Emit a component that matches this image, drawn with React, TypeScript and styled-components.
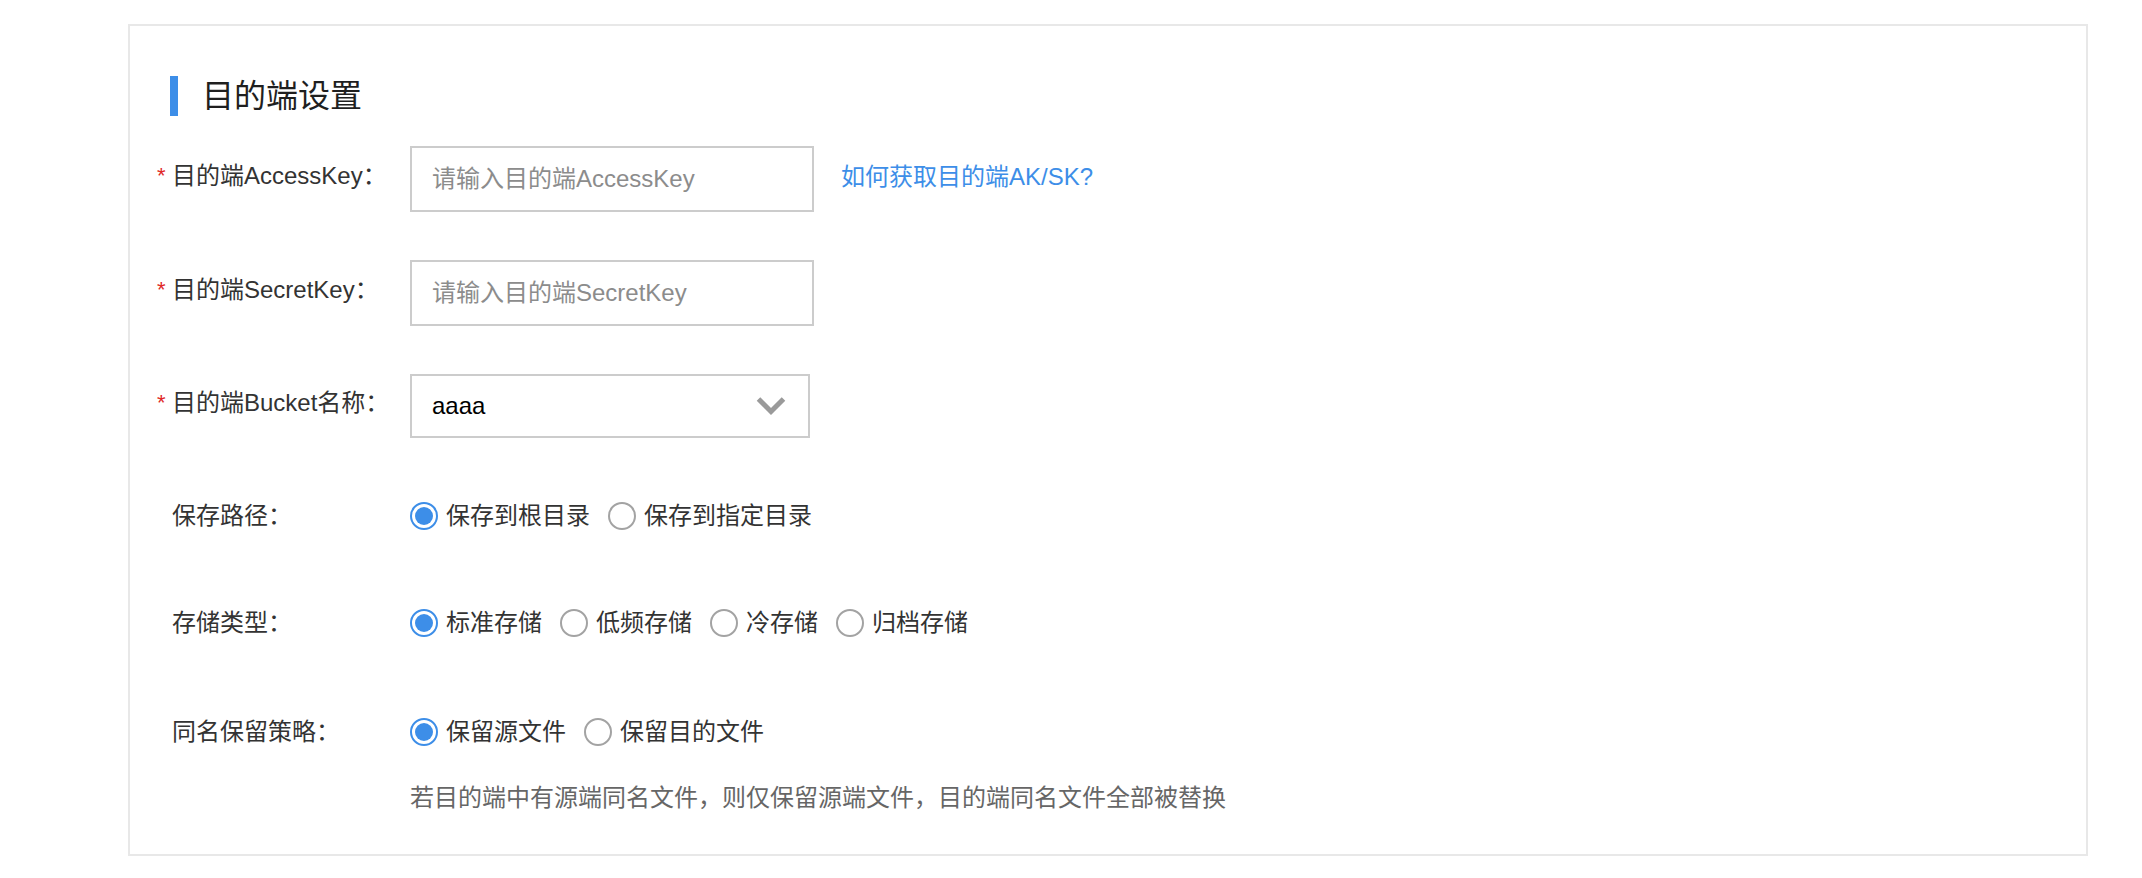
import React from 'react';
import styled, { createGlobalStyle } from 'styled-components';

const FONT = `"Liberation Sans", "Noto Sans CJK SC", sans-serif`;
const BLUE = '#3d8ee8';

const GlobalStyle = createGlobalStyle`
  html, body {
    margin: 0;
    padding: 0;
    background: #fff;
  }
  body {
    font-family: ${FONT};
    color: #333;
  }
`;

const Card = styled.section`
  box-sizing: border-box;
  width: 1960px;
  margin: 24px 0 0 128px;
  padding: 50px 0 38px 0;
  border: 2px solid #e8e8e8;
  background: #fff;
`;

const Header = styled.div`
  display: flex;
  align-items: center;
  height: 40px;
  padding-left: 40px;
  margin-bottom: 30px;
`;

const HeaderBar = styled.span`
  width: 8px;
  height: 40px;
  background: ${BLUE};
  margin-right: 24px;
`;

const Title = styled.h2`
  margin: 0;
  font-size: 32px;
  font-weight: 400;
  line-height: 40px;
  color: #1f1f1f;
`;

const Form = styled.div`
  display: flex;
  flex-direction: column;
  padding-left: 27px;
`;

interface RowProps {
  $top?: number;
}

const Row = styled.div<RowProps>`
  display: flex;
  align-items: center;
  margin-top: ${p => p.$top ?? 0}px;
`;

interface LabelProps {
  $lift?: boolean;
}

// labels beside text inputs sit a few pixels above the box centre
const Label = styled.label<LabelProps>`
  display: flex;
  align-items: center;
  width: 253px;
  flex-shrink: 0;
  margin-top: ${p => (p.$lift ? -6 : 0)}px;
  font-size: 24px;
  line-height: 36px;
  color: #333;
`;

const Asterisk = styled.span`
  width: 15px;
  color: #e02828;
  font-size: 22px;
`;

const TextInput = styled.input`
  box-sizing: border-box;
  width: 404px;
  height: 66px;
  padding: 0 20px;
  border: 2px solid #cccccc;
  border-radius: 0;
  outline: none;
  font-family: ${FONT};
  font-size: 24px;
  color: #000;

  &::placeholder {
    color: #8c8c8c;
  }
`;

const Select = styled.div`
  box-sizing: border-box;
  display: flex;
  align-items: center;
  justify-content: space-between;
  width: 400px;
  height: 64px;
  padding: 0 22px 0 20px;
  border: 2px solid #cccccc;
  font-family: ${FONT};
  font-size: 24px;
  color: #000;
`;

const HelpLink = styled.a`
  margin-left: 27px;
  margin-top: -4px;
  font-size: 24px;
  line-height: 36px;
  color: ${BLUE};
  text-decoration: none;
  cursor: pointer;
`;

const RadioGroup = styled.div`
  display: flex;
  align-items: center;
`;

const RadioOption = styled.label`
  display: flex;
  align-items: center;
  margin-right: 18px;
  font-size: 24px;
  line-height: 36px;
  color: #333;
  cursor: pointer;
`;

interface RadioDotProps {
  $checked: boolean;
}

const RadioDot = styled.span<RadioDotProps>`
  box-sizing: border-box;
  display: flex;
  align-items: center;
  justify-content: center;
  width: 28px;
  height: 28px;
  margin-right: 8px;
  border-radius: 50%;
  border: 2px solid ${p => (p.$checked ? BLUE : '#a3a3a3')};
  background: #fff;

  &::after {
    content: '';
    display: ${p => (p.$checked ? 'block' : 'none')};
    width: 18px;
    height: 18px;
    border-radius: 50%;
    background: ${BLUE};
  }
`;

const Hint = styled.p`
  margin: 30px 0 0 253px;
  font-size: 24px;
  line-height: 36px;
  color: #666;
`;

function Chevron() {
  return (
    <svg width="30" height="20" viewBox="0 0 30 20" aria-hidden="true">
      <polyline
        points="2.5,3 15,15.5 27.5,3"
        fill="none"
        stroke="#9a9a9a"
        strokeWidth="5"
        strokeLinejoin="miter"
      />
    </svg>
  );
}

interface RadioListProps {
  options: string[];
  value: number;
}

function RadioList({ options, value }: RadioListProps) {
  return (
    <RadioGroup>
      {options.map((opt, i) => (
        <RadioOption key={opt}>
          <RadioDot $checked={i === value} />
          {opt}
        </RadioOption>
      ))}
    </RadioGroup>
  );
}

export default function App() {
  return (
    <>
      <GlobalStyle />
      <Card>
        <Header>
          <HeaderBar />
          <Title>目的端设置</Title>
        </Header>
        <Form>
          <Row>
            <Label $lift>
              <Asterisk>*</Asterisk>目的端AccessKey：
            </Label>
            <TextInput placeholder="请输入目的端AccessKey" />
            <HelpLink>如何获取目的端AK/SK?</HelpLink>
          </Row>
          <Row $top={48}>
            <Label $lift>
              <Asterisk>*</Asterisk>目的端SecretKey：
            </Label>
            <TextInput placeholder="请输入目的端SecretKey" />
          </Row>
          <Row $top={48}>
            <Label $lift>
              <Asterisk>*</Asterisk>目的端Bucket名称：
            </Label>
            <Select>
              <span>aaaa</span>
              <Chevron />
            </Select>
          </Row>
          <Row $top={60}>
            <Label>
              <Asterisk />保存路径：
            </Label>
            <RadioList options={['保存到根目录', '保存到指定目录']} value={0} />
          </Row>
          <Row $top={71}>
            <Label>
              <Asterisk />存储类型：
            </Label>
            <RadioList options={['标准存储', '低频存储', '冷存储', '归档存储']} value={0} />
          </Row>
          <Row $top={73}>
            <Label>
              <Asterisk />同名保留策略：
            </Label>
            <RadioList options={['保留源文件', '保留目的文件']} value={0} />
          </Row>
          <Hint>若目的端中有源端同名文件，则仅保留源端文件，目的端同名文件全部被替换</Hint>
        </Form>
      </Card>
    </>
  );
}
